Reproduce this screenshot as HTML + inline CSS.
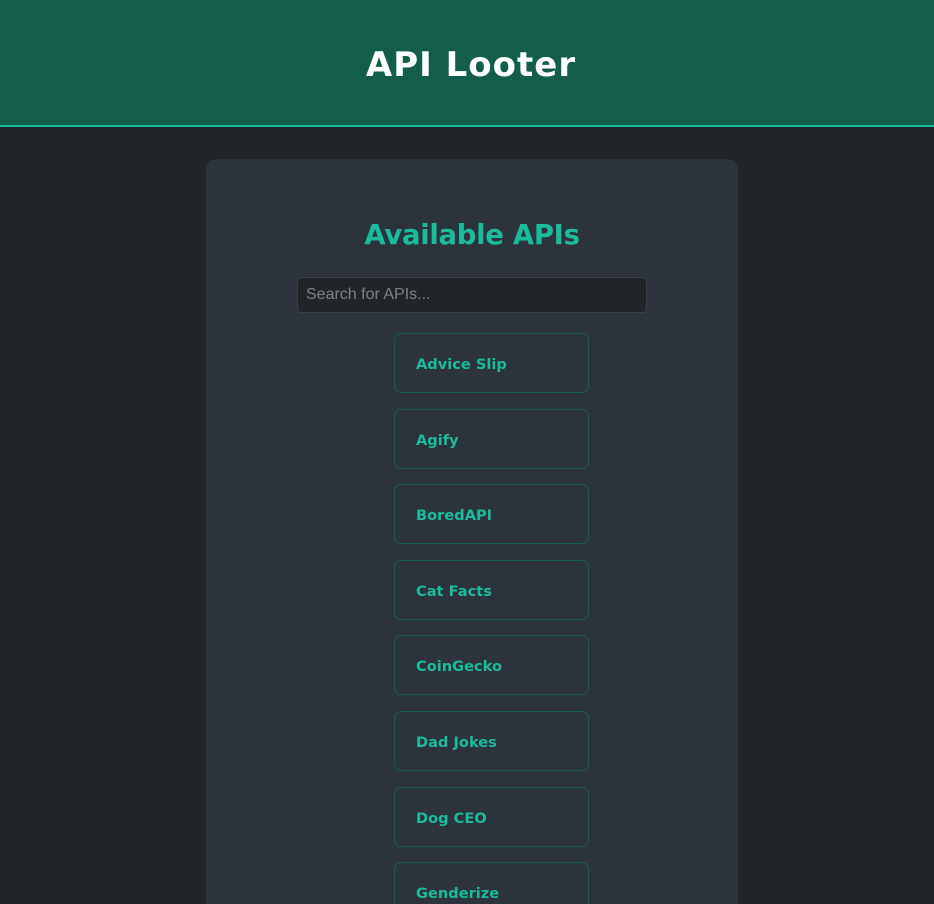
<!DOCTYPE html>
<html style="width:934px;height:904px;overflow:hidden"><head><style>
*{box-sizing:border-box;margin:0;padding:0}
body{width:934px;height:904px;overflow:hidden;background:#222528;font-family:"Liberation Sans",sans-serif;position:relative}
header{height:127px;background:#135e4b;border-bottom:2px solid #1abc9c;text-align:center;padding-left:8px}
header h1{color:#fff;font-size:34px;font-weight:bold;line-height:130px;letter-spacing:1px;font-family:"DejaVu Sans","Liberation Sans",sans-serif}
.panel{position:absolute;left:206px;top:159px;width:532px;height:745px;overflow:hidden;background:#2c333b;border-radius:10px 10px 0 0}
h2{position:absolute;top:60px;width:100%;text-align:center;color:#1abc9c;font-size:27.5px;font-family:"DejaVu Sans","Liberation Sans",sans-serif;font-weight:bold;letter-spacing:-0.3px}
.search{position:absolute;left:91px;top:118px;width:350px;height:36px;background:#222528;border:1px solid #3a4048;border-radius:4px;color:#7d8186;font-size:16px;padding:8px 8px}
.card{position:absolute;left:188px;width:195px;height:60px;border:1px solid #15604c;border-radius:7px;color:#1abc9c;font-weight:bold;font-size:14.6px;padding-left:21px;line-height:62px;font-family:"DejaVu Sans","Liberation Sans",sans-serif}
</style></head><body>
<header><h1>API Looter</h1></header>
<div class="panel">
<h2>Available APIs</h2>
<div class="search">Search for APIs...</div>
<div class="card" style="top:174px">Advice Slip</div>
<div class="card" style="top:250px">Agify</div>
<div class="card" style="top:325px">BoredAPI</div>
<div class="card" style="top:401px">Cat Facts</div>
<div class="card" style="top:476px">CoinGecko</div>
<div class="card" style="top:552px">Dad Jokes</div>
<div class="card" style="top:628px">Dog CEO</div>
<div class="card" style="top:703px">Genderize</div>
</div>
</body></html>
